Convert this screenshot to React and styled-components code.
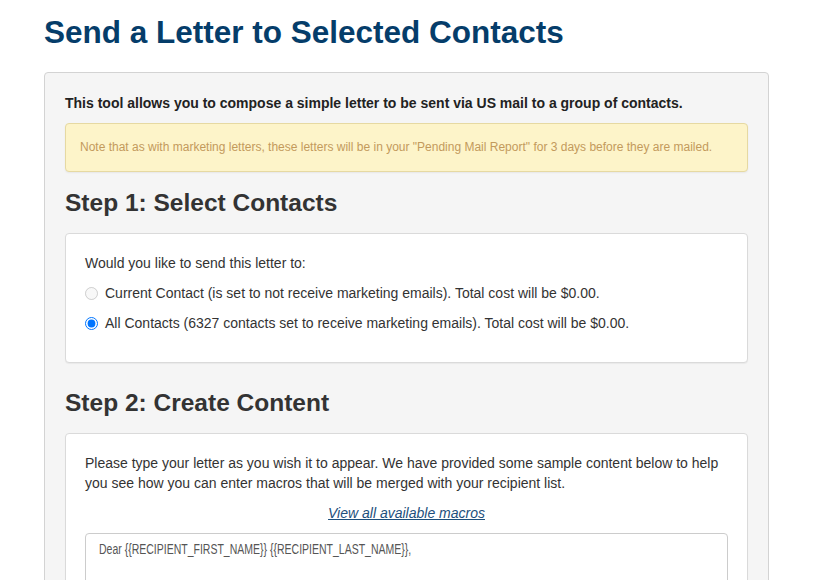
import React, { useState } from 'react';
import styled, { createGlobalStyle } from 'styled-components';

const GlobalStyle = createGlobalStyle`
  html, body {
    margin: 0;
    padding: 0;
    background: #ffffff;
    font-family: "Liberation Sans", Arial, sans-serif;
    color: #333333;
  }
`;

export default function App() {
  const [target, setTarget] = useState('all');

  return (
    <Page>
      <GlobalStyle />
      <Title>Send a Letter to Selected Contacts</Title>
      <Well>
        <Intro>This tool allows you to compose a simple letter to be sent via US mail to a group of contacts.</Intro>
        <Alert>
          Note that as with marketing letters, these letters will be in your &quot;Pending Mail Report&quot; for 3 days before they are mailed.
        </Alert>

        <StepHeading>Step 1: Select Contacts</StepHeading>
        <Panel>
          <Text>Would you like to send this letter to:</Text>
          <RadioRow>
            <Radio
              type="radio"
              name="target"
              disabled
              checked={target === 'current'}
              onChange={() => setTarget('current')}
            />
            Current Contact (is set to not receive marketing emails). Total cost will be $0.00.
          </RadioRow>
          <RadioRow>
            <Radio
              type="radio"
              name="target"
              checked={target === 'all'}
              onChange={() => setTarget('all')}
            />
            All Contacts (6327 contacts set to receive marketing emails). Total cost will be $0.00.
          </RadioRow>
        </Panel>

        <StepHeading>Step 2: Create Content</StepHeading>
        <Panel>
          <Text>
            Please type your letter as you wish it to appear. We have provided some sample content below to help
            you see how you can enter macros that will be merged with your recipient list.
          </Text>
          <MacroLink href="#macros">View all available macros</MacroLink>
          <Editor contentEditable suppressContentEditableWarning>
            <EditorLine>Dear {'{{RECIPIENT_FIRST_NAME}}'} {'{{RECIPIENT_LAST_NAME}}'},</EditorLine>
          </Editor>
        </Panel>
      </Well>
    </Page>
  );
}

const Page = styled.div`
  padding: 0 58px 0 44px;
  width: 725px;
`;

const Title = styled.h1`
  margin: 0;
  padding-top: 13px;
  height: 72px;
  box-sizing: border-box;
  font-size: 31.5px;
  line-height: 38px;
  font-weight: 700;
  color: #053d6a;
`;

const Well = styled.div`
  background: #f5f5f5;
  border: 1px solid #d3d3d3;
  border-radius: 4px;
  padding: 20px;
  min-height: 560px;
`;

const Intro = styled.p`
  margin: 0 0 10px;
  font-size: 14px;
  line-height: 20px;
  font-weight: 700;
  color: #222222;
`;

const Alert = styled.div`
  background: #fdf4c9;
  border: 1px solid #e6d9a2;
  border-radius: 4px;
  box-shadow: 0 1px 2px rgba(0, 0, 0, 0.06);
  padding: 15px 14px;
  font-size: 12px;
  line-height: 17px;
  color: #c39a5c;
`;

const StepHeading = styled.h3`
  margin: 17px 0 16px;
  font-size: 24.5px;
  line-height: 28px;
  font-weight: 700;
  color: #333333;
`;

const Panel = styled.div`
  background: #ffffff;
  border: 1px solid #dadada;
  border-radius: 4px;
  box-shadow: 0 1px 1px rgba(0, 0, 0, 0.05);
  padding: 19px;
  margin-bottom: 26px;
`;

const Text = styled.p`
  margin: 0 0 10px;
  font-size: 14px;
  line-height: 20px;
  color: #333333;
`;

const RadioRow = styled.label`
  display: flex;
  align-items: center;
  height: 20px;
  margin-bottom: 10px;
  font-size: 14px;
  color: #333333;
`;

const Radio = styled.input`
  width: 13px;
  height: 13px;
  margin: 0 7px 0 0;
`;

const MacroLink = styled.a`
  display: block;
  margin: 0 0 10px;
  text-align: center;
  font-size: 14px;
  line-height: 20px;
  font-style: italic;
  color: #1d4f7c;
  text-decoration: underline;
`;

const Editor = styled.div`
  box-sizing: border-box;
  height: 200px;
  padding: 5px 13px;
  border: 1px solid #cccccc;
  border-radius: 4px;
  background: #ffffff;
  outline: none;
`;

const EditorLine = styled.p`
  margin: 0;
  font-size: 14px;
  line-height: 20px;
  color: #555555;
  white-space: nowrap;
  transform: scaleX(0.75);
  transform-origin: left center;
`;
